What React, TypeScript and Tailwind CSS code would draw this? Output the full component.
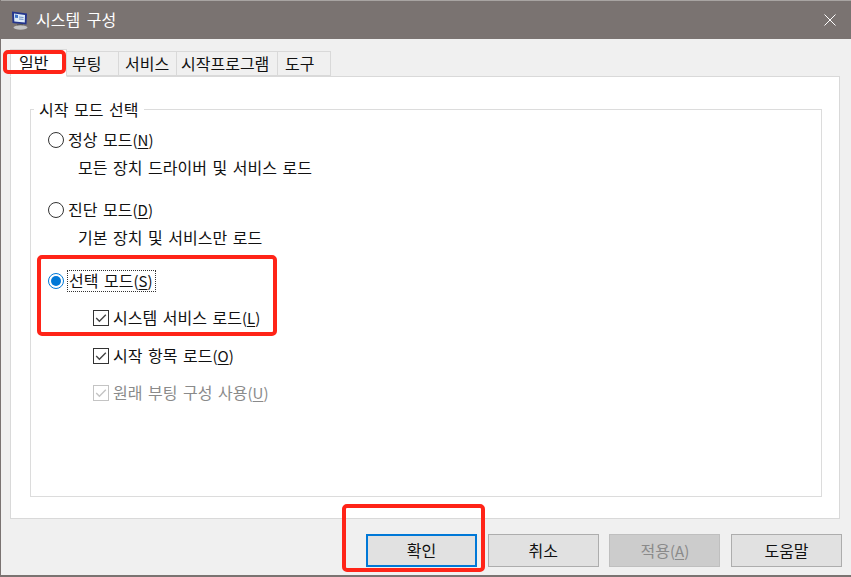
import React from "react";

const font = { fontFamily: '"Noto Sans CJK KR", "Liberation Sans", sans-serif' };

function Radio({ checked }: { checked?: boolean }) {
  return (
    <span className={`flex h-[16px] w-[16px] shrink-0 items-center justify-center rounded-full border-[1.5px] bg-white ${checked ? "border-[#0078d7]" : "border-[#333333]"}`}>
      {checked && <span className="h-[10px] w-[10px] rounded-full bg-[#0078d7]" />}
    </span>
  );
}

function Check({ disabled }: { disabled?: boolean }) {
  const color = disabled ? "#c4c4c4" : "#333333";
  return (
    <svg width="16" height="16" viewBox="0 0 16 16" className="shrink-0">
      <rect x="0.5" y="0.5" width="15" height="15" fill="#fff" stroke={color} />
      <path d="M3.2 8 L6.4 11.2 L12.8 4.8" fill="none" stroke={disabled ? "#c4c4c4" : "#444444"} strokeWidth="1.4" />
    </svg>
  );
}

function Label({ text, k, disabled }: { text: string; k: string; disabled?: boolean }) {
  return (
    <span className={`pb-[2px] ${disabled ? "text-[#8a8a8a]" : "text-[#111111]"}`}>
      {text}
      <span className="text-[15px]">
        (<span className="underline underline-offset-2">{k}</span>)
      </span>
    </span>
  );
}

const tabs = [
  ["일반", "w-[57px] pl-[8px]"],
  ["부팅", "w-[53px] pl-[5px]"],
  ["서비스", "w-[59px] pl-[6px]"],
  ["시작프로그램", "w-[102px] pl-[4px]"],
  ["도구", "w-[54px] pl-[7px]"],
];

function Btn({ children, kind }: { children: React.ReactNode; kind?: "primary" | "disabled" }) {
  const cls =
    kind === "primary"
      ? "border-2 border-[#0078d7] bg-[#e1e1e1] text-[#111111]"
      : kind === "disabled"
        ? "border border-[#bfbfbf] bg-[#cccccc] text-[#8a8a8a]"
        : "border border-[#adadad] bg-[#e1e1e1] text-[#111111]";
  return <div className={`flex h-[33px] w-[111px] items-center justify-center pb-[1px] ${cls}`}>{children}</div>;
}

export default function App() {
  return (
    <div style={font} className="relative flex h-[577px] w-[851px] flex-col overflow-hidden bg-[#f0f0f0] text-[16px] leading-none [word-spacing:2px]">
      <div className="flex h-[39px] shrink-0 items-center border-t border-t-[#a8a4a2] bg-[#7a7371] pl-[11px] pr-[15px]">
        <svg width="18" height="19" viewBox="0 0 18 19" className="shrink-0">
          <path d="M1 0.5 L16 2.5 L15.5 13.5 L1.5 12 Z" fill="#24358c" />
          <path d="M3 2.5 L14 4 L13.8 11.5 L3.3 10.5 Z" fill="#dcebf8" />
          <path d="M4 3.5 L7 3.9 L7 7 L4 6.8 Z" fill="#3f74c9" />
          <path d="M8 6 L12.5 6.5 M8 8 L12.5 8.4" stroke="#6f8fc9" strokeWidth="1" />
          <rect x="6" y="13" width="6" height="2" fill="#5a5a5a" />
          <ellipse cx="9.5" cy="16.5" rx="7" ry="2.2" fill="#c4c4c4" />
        </svg>
        <span className="ml-[7px] pb-[2px] text-[#ffffff] [word-spacing:3px]">시스템 구성</span>
        <svg width="12" height="12" viewBox="0 0 12 12" className="ml-auto">
          <path d="M0.5 0.5 L11.5 11.5 M11.5 0.5 L0.5 11.5" stroke="#fff" strokeWidth="1" />
        </svg>
      </div>

      <div className="flex flex-1 flex-col px-[10px] pt-[12px]">
        <div className="relative z-10 flex h-[25px] items-stretch">
          {tabs.map(([t, w], i) => (
            <div
              key={t}
              className={`flex items-center border border-[#d9d9d9] pb-[2px] text-[#111111] ${w} ${i === 0 ? "-mb-px -mt-[2px] border-b-white bg-white" : "-ml-px bg-[#f0f0f0]"}`}
            >
              {t}
            </div>
          ))}
        </div>
        <div className="h-[443px] w-[830px] border border-[#d9d9d9] bg-white px-[19px] pt-[24px]">
          <fieldset className="h-[396px] w-[792px] border border-[#dcdcdc] pl-[17px]">
            <legend className="-ml-[14px] px-[5px] text-[#111111]">시작 모드 선택</legend>
            <div className="mt-[12px] flex h-[22px] items-center gap-[4px]">
              <Radio />
              <Label text="정상 모드" k="N" />
            </div>
            <div className="ml-[30px] mt-[6px] flex h-[22px] items-center pb-[2px] text-[#111111]">모든 장치 드라이버 및 서비스 로드</div>
            <div className="mt-[20px] flex h-[22px] items-center gap-[4px]">
              <Radio />
              <Label text="진단 모드" k="D" />
            </div>
            <div className="ml-[30px] mt-[6px] flex h-[22px] items-center pb-[2px] text-[#111111]">기본 장치 및 서비스만 로드</div>
            <div className="mt-[21px] flex h-[22px] items-center gap-[3px]">
              <Radio checked />
              <span className="flex h-[22px] items-center border border-dotted border-[#333333] pl-px pr-[2px]">
                <Label text="선택 모드" k="S" />
              </span>
            </div>
            <div className="ml-[45px] mt-[15px] flex h-[22px] items-center gap-[4px]">
              <Check />
              <Label text="시스템 서비스 로드" k="L" />
            </div>
            <div className="ml-[45px] mt-[16px] flex h-[22px] items-center gap-[4px]">
              <Check />
              <Label text="시작 항목 로드" k="O" />
            </div>
            <div className="ml-[45px] mt-[15px] flex h-[22px] items-center gap-[4px]">
              <Check disabled />
              <Label text="원래 부팅 구성 사용" k="U" disabled />
            </div>
          </fieldset>
        </div>
        <div className="-mr-px mt-[15px] flex justify-end gap-[10.67px]">
          <Btn kind="primary">확인</Btn>
          <Btn>취소</Btn>
          <Btn kind="disabled">
            <span>적용<span className="text-[15px]">(<span className="underline underline-offset-2">A</span>)</span></span>
          </Btn>
          <Btn>도움말</Btn>
        </div>
      </div>
      <div className="absolute inset-x-0 bottom-0 h-[2px] bg-[#7a7371]" />
      <div className="absolute inset-y-0 left-0 w-px bg-[#7a7371]" />

      <div className="absolute left-[3px] top-[50px] z-20 h-[24px] w-[63px] rounded-[5px] border-[4px] border-[#ff2418]" />
      <div className="absolute left-[37px] top-[255px] z-20 h-[81px] w-[240px] rounded-[5px] border-[4px] border-[#ff2418]" />
      <div className="absolute left-[342px] top-[504px] z-20 h-[68px] w-[143px] rounded-[5px] border-[4px] border-[#ff2418]" />
    </div>
  );
}
